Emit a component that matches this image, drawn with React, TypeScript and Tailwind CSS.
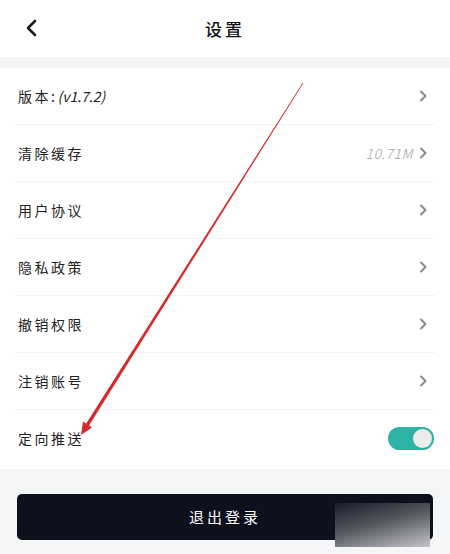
import React from "react";

const Chevron = () => (
  <svg width="9" height="12" viewBox="0 0 9 12" fill="none">
    <path d="M2 1.5 L6.5 6 L2 10.5" stroke="#8a8a8a" strokeWidth="2" strokeLinecap="round" strokeLinejoin="round" />
  </svg>
);

const rows: { label: string; latin?: string; value?: string; toggle?: boolean }[] = [
  { label: "版本:", latin: "(v1.7.2)" },
  { label: "清除缓存", value: "10.71M" },
  { label: "用户协议" },
  { label: "隐私政策" },
  { label: "撤销权限" },
  { label: "注销账号" },
  { label: "定向推送", toggle: true },
];

export default function App() {
  return (
    <div
      className="relative w-[450px] h-[554px] overflow-hidden bg-[#f4f5f7] text-[#1a1a1a]"
      style={{ fontFamily: '"Noto Sans CJK SC", "Noto Sans", sans-serif' }}
    >
      <div className="relative h-[57px] bg-white flex items-center justify-center">
        <div className="absolute left-[24px] top-[18px]">
          <svg width="16" height="20" viewBox="0 0 16 20" fill="none">
            <path d="M11 3 L4 10 L11 17" stroke="#1a1a1a" strokeWidth="2.6" strokeLinecap="round" strokeLinejoin="round" />
          </svg>
        </div>
        <span className="text-[17px] tracking-[3px] font-medium text-[#111]">设置</span>
      </div>
      <div className="h-[11px]" />
      <div className="bg-white px-[15px] pb-[2px]">
        {rows.map((r, i) => (
          <div
            key={r.label}
            className={`h-[57px] flex items-center justify-between pl-[3px] pr-[7px] ${i < rows.length - 1 ? "border-b border-[#f3f3f3]" : ""}`}
          >
            <span className="text-[14px] text-[#222]">
              <span className="tracking-[2.5px]">{r.label}</span>
              {r.latin && <span className="italic tracking-[0px]">{r.latin}</span>}
            </span>
            {r.toggle ? (
              <div className="w-[46px] h-[23px] rounded-full bg-[#2db3a6] flex items-center justify-end p-[2px] -mr-[6px]">
                <div className="w-[19px] h-[19px] rounded-full bg-[#ececec]" />
              </div>
            ) : (
              <div className="flex items-center gap-[6px]">
                {r.value && <span className="text-[14px] italic font-light text-[#a5a5a5] tracking-[0.5px]">{r.value}</span>}
                <Chevron />
              </div>
            )}
          </div>
        ))}
      </div>
      <div className="mt-[25px] mx-[17px] h-[46px] rounded-[5px] bg-[#0d111c] flex items-center justify-center">
        <span className="text-white text-[15px] tracking-[3px]">退出登录</span>
      </div>

      <div className="absolute left-[335px] top-[503px] w-[95px] h-[44px] bg-[linear-gradient(165deg,#1a1c28_0%,#54565f_45%,#c4c4ca_100%)]" />

      <svg className="absolute left-0 top-0 pointer-events-none" width="450" height="554" viewBox="0 0 450 554">
        <polygon points="303.3,83.2 302.7,82.8 85.9,423.9 88.9,425.8" fill="#d42a2a" />
        <polygon points="81,435 83,421.5 92,427.5" fill="#d42a2a" />
      </svg>
    </div>
  );
}
